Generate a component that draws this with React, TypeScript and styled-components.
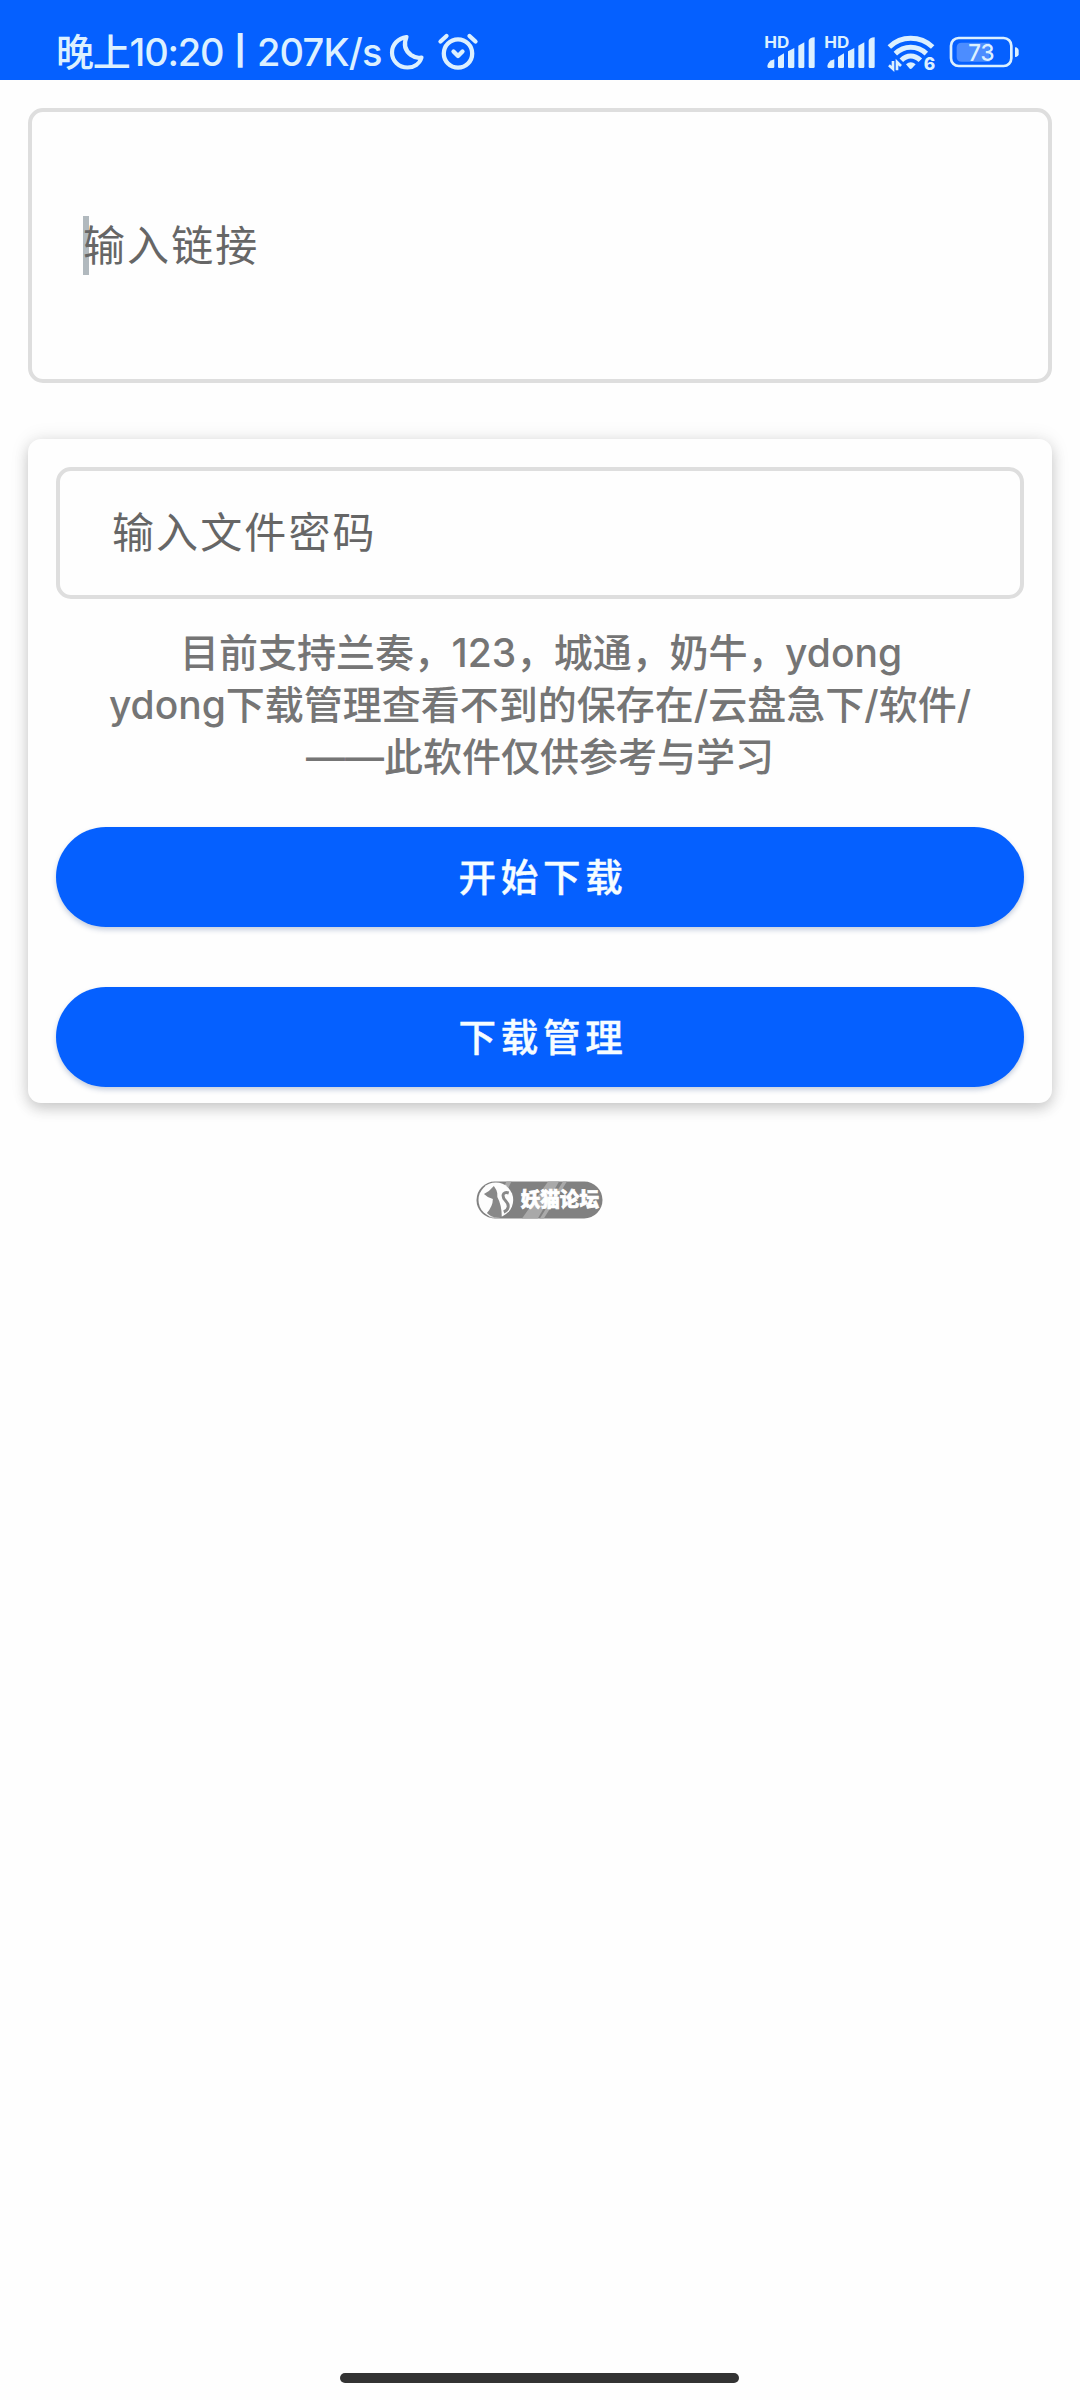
import React from "react";
import styled, { createGlobalStyle } from "styled-components";

const tint = "#dcf0ff";
const blue = "#0560ff";

const GlobalStyle = createGlobalStyle`
  * { box-sizing: border-box; }
  body {
    margin: 0;
    background: #fefefe;
    font-family: Inter, "Noto Sans CJK SC", sans-serif;
  }
`;

const Screen = styled.div`
  display: flex;
  flex-direction: column;
  width: 1080px;
  height: 2400px;
  overflow: hidden;
`;

const StatusBar = styled.header`
  display: flex;
  justify-content: space-between;
  flex: none;
  height: 80px;
  padding: 33px 61px 0 56px;
  background: ${blue};
  color: ${tint};
`;

const StatusGroup = styled.div<{ $top?: number }>`
  display: flex;
  align-items: flex-start;
  padding-top: ${(p) => p.$top ?? 0}px;
`;

const StatusText = styled.span<{ $width: number; $spacing: number }>`
  width: ${(p) => p.$width}px;
  font-size: 38px;
  font-weight: 550;
  line-height: 38px;
  letter-spacing: ${(p) => p.$spacing}px;
  white-space: pre;
`;

const Separator = styled.span`
  width: 34px;
  font-size: 29px;
  font-weight: 800;
  line-height: 35px;
  text-align: center;
`;

const Glyph = styled.svg<{ $gap?: number }>`
  display: block;
  flex: none;
  margin-left: ${(p) => p.$gap ?? 0}px;
  overflow: visible;
`;

const Main = styled.main`
  display: flex;
  flex-direction: column;
  flex: 1;
  padding: 28px 28px 0;
`;

const Field = styled.div<{ $height: number; $indent: number }>`
  display: flex;
  align-items: center;
  height: ${(p) => p.$height}px;
  padding-left: ${(p) => p.$indent}px;
  border: 4px solid #dedede;
  border-radius: 15px;
`;

const Caret = styled.span`
  width: 6px;
  height: 59px;
  margin-right: -6px;
  background: #b1b9be;
`;

const Placeholder = styled.span`
  position: relative;
  color: #666;
  font-size: 42px;
  line-height: 60px;
  letter-spacing: 2.1px;
`;

const Card = styled.section`
  display: flex;
  flex-direction: column;
  height: 664px;
  margin-top: 56px;
  padding: 28px 28px 0;
  border-radius: 13px;
  background: #fefefe;
  box-shadow: 0 6px 14px rgba(0, 0, 0, 0.17), 0 0 20px rgba(0, 0, 0, 0.09);
`;

const Notice = styled.p`
  margin: 28px 0 0;
  color: #757575;
  font-size: 39px;
  font-weight: 500;
  line-height: 52px;
  text-align: center;
  white-space: nowrap;
`;

const SupportedSites = styled.span`
  padding-left: 2px;
`;

const Comma = styled.span`
  letter-spacing: -1.4px;
`;

const Action = styled.button<{ $gap: number }>`
  display: flex;
  align-items: center;
  justify-content: center;
  flex: none;
  height: 100px;
  margin-top: ${(p) => p.$gap}px;
  padding: 0 0 5px 6px;
  border: 0;
  border-radius: 50px;
  background: ${blue};
  color: #f6fdff;
  font-family: inherit;
  font-size: 37.5px;
  font-weight: 500;
  letter-spacing: 4.8px;
  -webkit-text-stroke: 0.4px #f6fdff;
  box-shadow: 0 3px 5px rgba(40, 70, 130, 0.25);
`;

const Badge = styled.div`
  display: flex;
  justify-content: center;
  margin: 78px 1px 0 0;
`;

const HomeArea = styled.footer`
  display: flex;
  justify-content: center;
  flex: none;
  height: 27px;
  padding-right: 2px;
`;

const HomeBar = styled.div`
  width: 399px;
  height: 10px;
  border-radius: 5px;
  background: #333;
`;

const Moon = () => (
  <Glyph width="36" height="38" viewBox="0 0 36 38" fill="none" stroke={tint} strokeWidth="4.2" strokeLinejoin="round">
    <path d="M17.5 4C9 5.500 3 11.500 3 19.500C3 28 10 34.500 18.500 34.500C25 34.500 30.500 31 32.500 24.500C29 25.500 25.500 24.500 22 22C16 17.500 14.500 11 17.500 4Z" />
  </Glyph>
);

const Alarm = () => (
  <Glyph $gap={13} width="40" height="38" viewBox="0 0 40 38" fill="none" stroke={tint} strokeWidth="4.3" strokeLinecap="round" strokeLinejoin="round">
    <circle cx="20" cy="20.500" r="14.200" />
    <path d="M2.500 8.500L8.500 3M37.500 8.500L31.500 3" />
    <path d="M15.500 18.500L20 23L24.500 18.500" />
  </Glyph>
);

const Signal = ({ gap }: { gap?: number }) => (
  <Glyph $gap={gap} width="50" height="34" viewBox="75 105 150 102" fill={tint}>
    <text x="73" y="145" fontFamily="Inter" fontSize="48" fontWeight="700" textLength="75" lengthAdjust="spacingAndGlyphs">HD</text>
    <path d="M82 198Q84 183 103 178V200Q103 204 99 204H86Q82 204 82 198Z" />
    <path d="M114 171L132 160V200Q132 204 128 204H118Q114 204 114 200Z" />
    <path d="M144 154L163 144V200Q163 204 159 204H148Q144 204 144 200Z" />
    <path d="M175 137L193 127V200Q193 204 189 204H179Q175 204 175 200Z" />
    <path d="M206 122Q208 113 224 112V200Q224 204 220 204H210Q206 204 206 200Z" />
  </Glyph>
);

const Wifi = () => (
  <Glyph $gap={12} width="48" height="37" viewBox="441 105 144 111">
    <g fill="none" stroke={tint} strokeWidth="15">
      <path d="M448 141Q475 115 512 115Q550 115 578 141" />
      <path d="M466 161Q486 142 512 142Q539 142 559 161" />
      <path d="M484 181Q497 168 512 168Q528 168 541 181" />
    </g>
    <path d="M498 193Q512 180 527 193L516 205Q512 209 508 205Z" fill={tint} />
    <path d="M459 183V207L447 196M471 211V186L483 198" fill="none" stroke={tint} strokeWidth="8" />
    <text x="551" y="211" fontFamily="Inter" fontSize="52" fontWeight="800" fill={tint}>6</text>
  </Glyph>
);

const Battery = () => (
  <Glyph $gap={14} width="70" height="33" viewBox="624 105 210 99">
    <rect x="630" y="114" width="181" height="84" rx="23" fill="none" stroke={tint} strokeWidth="8" />
    <path d="M662 128H746V185H662Q647 185 647 170V143Q647 128 662 128Z" fill="#4c8dff" />
    <path d="M822 142Q833 143 833 150V163Q833 170 822 171Z" fill={tint} />
    <text x="721" y="184" textAnchor="middle" fontFamily="Inter" fontSize="70" fontWeight="550" fill={tint} textLength="79" lengthAdjust="spacingAndGlyphs">73</text>
  </Glyph>
);

const ForumLogo = () => (
  <Glyph width="127" height="38" viewBox="0 0 128 38" preserveAspectRatio="none">
    <defs>
      <clipPath id="pill"><rect x="0.500" y="0.500" width="127" height="37" rx="18.500" /></clipPath>
    </defs>
    <rect x="0.500" y="0.500" width="127" height="37" rx="18.500" fill="#818181" />
    <g clipPath="url(#pill)" fill="#a9a9a9">
      <path d="M31 0H36L17 38H12Z" />
      <path d="M73 0H84L62 38H46Z" />
      <path d="M88 0H92L68 38H64Z" />
    </g>
    <circle cx="20" cy="19" r="17.500" fill="#fdfdfd" />
    <path d="M8 13L13 10L18 5L20.500 9Q22 12 21.500 16Q26 24 26 36Q17 38 11 32Q17 25 17 18Q12 17 8 13Z" fill="#888" />
    <path d="M33 12C26 10 26 16 30 20C34 24 33 29 28 31" fill="none" stroke="#888" strokeWidth="3" />
    <text x="45" y="26.500" fontFamily="'Noto Sans CJK SC'" fontSize="20" fontWeight="900" fill="#fff" stroke="#fff" strokeWidth="0.700" textLength="79" lengthAdjust="spacingAndGlyphs">妖猫论坛</text>
  </Glyph>
);

export default function App() {
  return (
    <Screen>
      <GlobalStyle />
      <StatusBar>
        <StatusGroup>
          <StatusText $width={167} $spacing={-1.2}>晚上10:20</StatusText>
          <Separator>|</Separator>
          <StatusText $width={132} $spacing={-0.8}>207K/s</StatusText>
          <Moon />
          <Alarm />
        </StatusGroup>
        <StatusGroup $top={2}>
          <Signal />
          <Signal gap={10} />
          <Wifi />
          <Battery />
        </StatusGroup>
      </StatusBar>
      <Main>
        <Field $height={275} $indent={51}>
          <Caret />
          <Placeholder>输入链接</Placeholder>
        </Field>
        <Card>
          <Field $height={132} $indent={52}>
            <Placeholder>输入文件密码</Placeholder>
          </Field>
          <Notice>
            <SupportedSites>
              目前支持兰奏<Comma>，</Comma>123<Comma>，</Comma>城通<Comma>，</Comma>奶牛<Comma>，</Comma>ydong
            </SupportedSites>
            <br />
            ydong下载管理查看不到的保存在/云盘急下/软件/
            <br />
            ——此软件仅供参考与学习
          </Notice>
          <Action $gap={44}>开始下载</Action>
          <Action $gap={60}>下载管理</Action>
        </Card>
        <Badge>
          <ForumLogo />
        </Badge>
      </Main>
      <HomeArea>
        <HomeBar />
      </HomeArea>
    </Screen>
  );
}
